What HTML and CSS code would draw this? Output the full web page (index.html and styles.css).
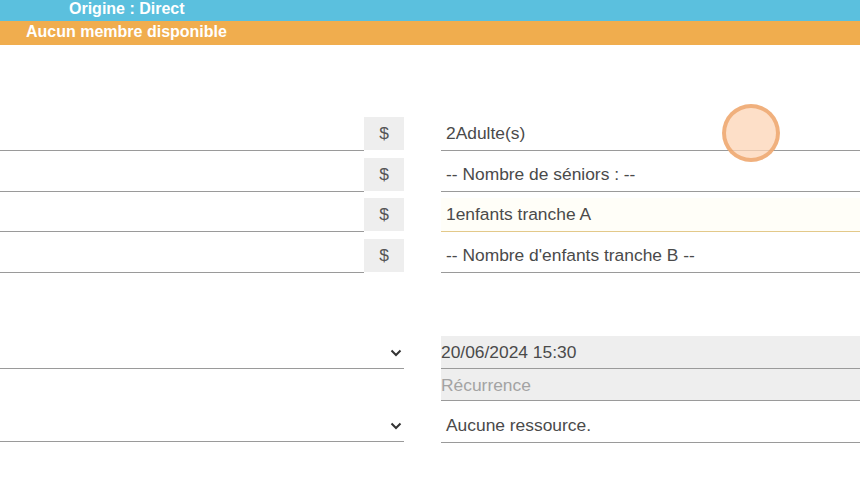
FILE: index.html
```html
<!DOCTYPE html>
<html lang="fr">
<head>
    <meta charset="UTF-8">
    <meta name="viewport" content="width=device-width, initial-scale=1.0">
    <title>Réservation</title>
    <link rel="stylesheet" href="styles.css">
</head>
<body>
    <!-- Bandeaux d'information -->
    <div class="bar bar-origin">Origine : Direct</div>
    <div class="bar bar-members">Aucun membre disponible</div>

    <!-- Tarifs et participants -->
    <section class="grid pricing">
        <div class="field">
            <input class="line-input" type="text">
            <span class="addon">$</span>
        </div>
        <div class="field">
            <input class="line-input" type="text" value="2Adulte(s)">
        </div>

        <div class="field">
            <input class="line-input" type="text">
            <span class="addon">$</span>
        </div>
        <div class="field">
            <input class="line-input" type="text" value="-- Nombre de séniors : --">
        </div>

        <div class="field">
            <input class="line-input" type="text">
            <span class="addon">$</span>
        </div>
        <div class="field">
            <input class="line-input focused" type="text" value="1enfants tranche A">
        </div>

        <div class="field">
            <input class="line-input" type="text">
            <span class="addon">$</span>
        </div>
        <div class="field">
            <input class="line-input" type="text" value="-- Nombre d'enfants tranche B --">
        </div>
    </section>

    <!-- Date, récurrence et ressources -->
    <section class="grid schedule">
        <div class="select-line">
            <svg class="chevron" width="12" height="8" viewBox="0 0 12 8"><polyline points="1.5,1.5 6,6 10.5,1.5" fill="none" stroke="#333" stroke-width="2"/></svg>
        </div>
        <div class="date-box">
            <div class="date-row">20/06/2024 15:30</div>
            <div class="date-row placeholder">Récurrence</div>
        </div>

        <div class="select-line">
            <svg class="chevron" width="12" height="8" viewBox="0 0 12 8"><polyline points="1.5,1.5 6,6 10.5,1.5" fill="none" stroke="#333" stroke-width="2"/></svg>
        </div>
        <div class="field">
            <div class="line-input">Aucune ressource.</div>
        </div>
    </section>

    <!-- Effet de clic -->
    <span class="ripple"></span>
</body>
</html>
```

FILE: styles.css
```css
body {
    font-family: "Liberation Sans", Arial, sans-serif;
    font-size: 17.4px;
    color: #4a4a4a;
    background: #fff;
    margin: 0;
    padding: 0;
    overflow: hidden;
}

.bar {
    color: #fff;
    font-weight: bold;
    font-size: 16px;
    white-space: nowrap;
}

.bar-origin {
    background-color: #5bc0de;
    height: 21px;
    padding-left: 69px;
    line-height: 17px;
}

.bar-members {
    background-color: #f0ad4e;
    height: 24px;
    padding-left: 26px;
    line-height: 22px;
}

.grid {
    display: grid;
    grid-template-columns: 404px 1fr;
    column-gap: 37px;
}

.pricing {
    margin-top: 72px;
    row-gap: 6.7px;
}

.field {
    display: flex;
    align-items: stretch;
    height: 34px;
}

.line-input {
    flex: 1;
    min-width: 0;
    box-sizing: border-box;
    height: 34px;
    border: none;
    border-bottom: 1px solid #9a9a9a;
    background: transparent;
    font-family: inherit;
    font-size: 17.4px;
    color: #4a4a4a;
    padding: 0 5px;
    outline: none;
    line-height: 33px;
}

.line-input.focused {
    border-bottom-color: #e3c98a;
    background: #fffef8;
}

.addon {
    width: 40px;
    height: 33px;
    background: #eee;
    color: #555;
    text-align: center;
    line-height: 33px;
}

.schedule {
    margin-top: 63px;
    row-gap: 8px;
    align-items: start;
}

.select-line {
    height: 33px;
    box-sizing: border-box;
    border-bottom: 1px solid #9a9a9a;
    display: flex;
    justify-content: flex-end;
    align-items: center;
    padding-right: 2px;
}

.chevron {
    margin-top: 2px;
}

.date-box {
    background: #eee;
}

.date-row {
    height: 32px;
    box-sizing: border-box;
    border-bottom: 1px solid #9a9a9a;
    line-height: 32px;
    color: #4a4a4a;
}

.date-row:first-child {
    height: 33px;
}

.date-row.placeholder {
    color: #a3a3a3;
}

.ripple {
    position: absolute;
    left: 722px;
    top: 104px;
    width: 58px;
    height: 58px;
    box-sizing: border-box;
    border-radius: 50%;
    background: rgba(252, 212, 182, 0.75);
    border: 4px solid rgba(236, 160, 100, 0.75);
}
```
